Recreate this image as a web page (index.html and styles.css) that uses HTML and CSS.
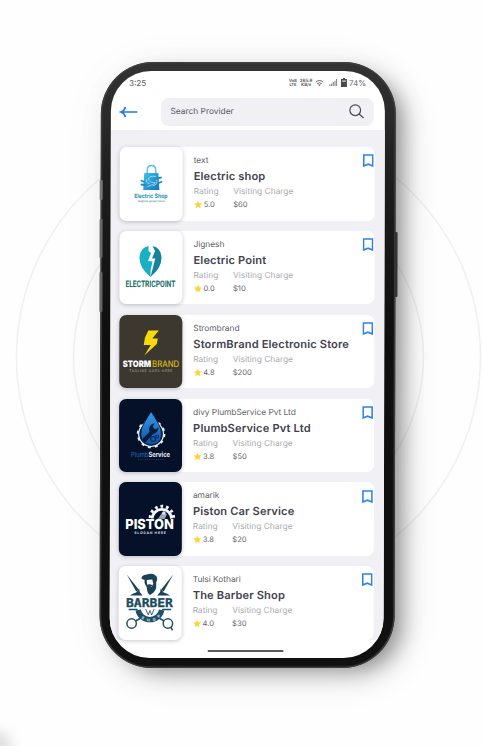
FILE: index.html
```html
<!DOCTYPE html>
<html lang="en">
<head>
<meta charset="utf-8">
<title>Service providers</title>
<link rel="stylesheet" href="styles.css">
</head>
<body>
<svg class="rings" viewBox="0 0 482 746" aria-hidden="true">
  <circle cx="248.5" cy="357" r="232"/><circle cx="248.5" cy="357" r="175"/>
</svg>
<div class="corner-smudge"></div>
<svg width="0" height="0" class="defs" aria-hidden="true">
  <defs>
    <symbol id="bookmark" viewBox="0 0 11 13"><path d="M1 1H10V12L5.5 10.2L1 12Z" fill="none" stroke="#2f83e4" stroke-width="1.6"/></symbol>
    <symbol id="star" viewBox="0 0 10 10"><path d="M5 .7L6.3 3.5L9.4 3.9L7.1 6L7.7 9.1L5 7.6L2.3 9.1L2.9 6L.6 3.9L3.7 3.5Z" fill="#fcd535"/></symbol>
    <linearGradient id="bag" x1="0" y1="0" x2="1" y2="1"><stop offset="0" stop-color="#3cc4ec"/><stop offset="1" stop-color="#1673b8"/></linearGradient>
    <linearGradient id="drop" x1="0" y1="0" x2="0" y2="1"><stop offset="0" stop-color="#3a9bea"/><stop offset="1" stop-color="#0d4fa8"/></linearGradient>
  </defs>
</svg>
<main class="phone">
  <i class="key key-right"></i><i class="key key-a"></i><i class="key key-b"></i><i class="key key-c"></i>
  <div class="screen">
    <header class="status">
      <span class="time">3:25</span>
      <span class="tiny">VoB<br>LTE</span>
      <span class="tiny rate">265.9<br>KB/s</span>
      <svg class="wifi" viewBox="0 0 10 8"><path d="M.8 3Q5-.6 9.2 3M2.4 4.8Q5 2.6 7.6 4.8" fill="none" stroke="#666" stroke-width="1.1"/><path d="M3.6 6L5 7.6L6.4 6Q5 5 3.6 6Z" fill="#666"/></svg>
      <svg class="signal" viewBox="0 0 9 8"><path d="M0 6H1.3V8H0ZM2 5H3.3V8H2ZM4 3.5H5.3V8H4ZM6 2H7.2V8H6ZM7.8 0H9V8H7.8Z" fill="#888"/></svg>
      <svg class="battery" viewBox="0 0 6 9"><path d="M2 0H4V1H6V9H0V1H2Z" fill="#4a4a4a"/><path d="M1 2.2H5V4H1Z" fill="#aaa"/></svg>
      <span class="percent">74%</span>
    </header>
    <div class="toolbar">
      <svg class="back" viewBox="0 0 18 12"><path d="M17.5 6H1.6M5.4 .8Q5 4.5 1 6Q5 7.5 5.4 11.2" fill="none" stroke="#147bf0" stroke-width="1.7"/></svg>
      <div class="search"><span>Search Provider</span>
        <svg viewBox="0 0 16 16"><circle cx="6.5" cy="6.6" r="5.7"/><path d="M10.7 10.6L15.4 15"/></svg>
      </div>
    </div>
    <section class="list">
      <article class="card">
        <div class="thumb"><svg viewBox="0 0 63 73.4">
          <path d="M27.5 28V23Q27.5 18.5 31.7 18.5Q36 18.5 36 23V28" fill="none" stroke="#4fc3e8" stroke-width="1.4"/>
          <path d="M24.5 26H38.7L39.7 43H23.5Z" fill="url(#bag)"/>
          <path d="M36 29.5Q29 28.5 29 32T34 35.5T28 39.5M27 32Q25.5 36 30 36.5M37 33Q38.5 37 33 39" fill="none" stroke="#a5dcf2" stroke-width=".9"/>
          <path d="M21 33.5L25 35M21 37.5L26 38M38 31.5L42 30.5M39 36L42.5 34.5" stroke="#2485b9" stroke-width="1.8"/>
          <text x="14.5" y="51.2" textLength="33.5" lengthAdjust="spacingAndGlyphs" class="lg-electric">Electric Shop</text>
          <text x="18" y="55" textLength="27" lengthAdjust="spacingAndGlyphs" class="lg-tag">tagline goes here</text>
        </svg></div>
        <div class="info"><p class="owner">text</p><h2>Electric shop</h2>
          <div class="facts"><span class="label">Rating</span><span class="label">Visiting Charge</span><span class="value"><svg><use href="#star"/></svg>5.0</span><span class="value">$60</span></div></div>
        <svg class="mark"><use href="#bookmark"/></svg>
      </article>
      <article class="card">
        <div class="thumb"><svg viewBox="0 0 63 73.4">
          <path d="M29 15Q20 17 20 27Q20 37 31 46L31.2 39L33 30.5L28.5 30L31.5 22L29 20Z" fill="#18b0c4"/>
          <path d="M33 15Q42 17 42 27Q42 37 31 46L35.8 27.5H32.5L35.5 20Z" fill="#168398"/>
          <text x="6" y="56.5" textLength="50" lengthAdjust="spacingAndGlyphs" class="lg-point">ELECTRICPOINT</text>
        </svg></div>
        <div class="info"><p class="owner">Jignesh</p><h2>Electric Point</h2>
          <div class="facts"><span class="label">Rating</span><span class="label">Visiting Charge</span><span class="value"><svg><use href="#star"/></svg>0.0</span><span class="value">$10</span></div></div>
        <svg class="mark"><use href="#bookmark"/></svg>
      </article>
      <article class="card">
        <div class="thumb storm"><svg viewBox="0 0 63 73.4">
          <path d="M29 15.5H39.5L33 23.5H38.5L37.5 29L25 40.5L31.5 30H24.5L25.5 23Z" fill="#f5d90a"/>
          <text x="3.5" y="51.8" textLength="28.4" lengthAdjust="spacingAndGlyphs" class="lg-storm">STORM</text>
          <text x="32.8" y="51.8" textLength="27.2" lengthAdjust="spacingAndGlyphs" class="lg-brand">BRAND</text>
          <text x="10" y="57.5" textLength="43" class="lg-line">TAGLINE GOES HERE</text>
        </svg></div>
        <div class="info"><p class="owner">Strombrand</p><h2>StormBrand Electronic Store</h2>
          <div class="facts"><span class="label">Rating</span><span class="label">Visiting Charge</span><span class="value"><svg><use href="#star"/></svg>4.8</span><span class="value">$200</span></div></div>
        <svg class="mark"><use href="#bookmark"/></svg>
      </article>
      <article class="card">
        <div class="thumb navy"><svg viewBox="0 0 63 73.4">
          <circle cx="32" cy="35" r="12.4" fill="none" stroke="#e3edf6" stroke-width="1.3"/>
          <circle cx="32" cy="35" r="13.3" fill="none" stroke="#e3edf6" stroke-width="2" stroke-dasharray="3 3.97"/>
          <path d="M32 12.5Q39 23 41.8 30Q45 45 32 46Q19 45 22.2 30Q25 23 32 12.5Z" fill="url(#drop)" stroke="#06132b" stroke-width=".8"/>
          <path d="M22.8 40.5L30.5 33Q29 28 32.5 25.5L35.5 24L33.5 28L36 30.5L39.5 28.5Q39 34 34 35L26 44Z" fill="#071a38"/>
          <circle cx="34" cy="40" r="2.4" fill="none" stroke="#092a59" stroke-width="1.2"/><circle cx="38" cy="37.5" r="1.5" fill="none" stroke="#092a59"/>
          <text x="12" y="57.8" class="lg-plumb" textLength="39" lengthAdjust="spacingAndGlyphs">Plumb<tspan class="lg-service">Service</tspan></text>
          <path d="M19 60.5H45" stroke="#19498a" stroke-width=".7" stroke-dasharray="1 .8"/>
        </svg></div>
        <div class="info"><p class="owner">divy PlumbService Pvt Ltd</p><h2>PlumbService Pvt Ltd</h2>
          <div class="facts"><span class="label">Rating</span><span class="label">Visiting Charge</span><span class="value"><svg><use href="#star"/></svg>3.8</span><span class="value">$50</span></div></div>
        <svg class="mark"><use href="#bookmark"/></svg>
      </article>
      <article class="card">
        <div class="thumb navy"><svg viewBox="0 0 63 73.4">
          <path d="M33.3 37A9.7 9.7 0 1 1 52.7 37" fill="none" stroke="#f4f6fa" stroke-width="2.8"/>
          <path d="M31.3 36A11.7 11.7 0 1 1 54.7 36" fill="none" stroke="#f4f6fa" stroke-width="3" stroke-dasharray="2.7 2.9"/>
          <path d="M39 37L43 31L48 32L46 37Z" fill="#9aa6bb"/><circle cx="45" cy="31" r="1.8" fill="#dfe5ee"/>
          <text x="6.5" y="47" textLength="48.5" lengthAdjust="spacingAndGlyphs" class="lg-piston">PISTON</text>
          <text x="15.5" y="52.5" textLength="31.5" class="lg-slogan">SLOGAN HERE</text>
        </svg></div>
        <div class="info"><p class="owner">amarik</p><h2>Piston Car Service</h2>
          <div class="facts"><span class="label">Rating</span><span class="label">Visiting Charge</span><span class="value"><svg><use href="#star"/></svg>3.8</span><span class="value">$20</span></div></div>
        <svg class="mark"><use href="#bookmark"/></svg>
      </article>
      <article class="card">
        <div class="thumb"><svg viewBox="0 0 63 73.4">
          <g fill="#1b4258">
            <path d="M23 13Q22 9 28 8.5Q34 6.5 37.5 10Q39.5 13 37.5 16V22Q36 27 31 29Q28 26 28 21Q25 17 26 14Z"/>
            <path d="M28 14L33.5 13.5L34.5 17.5L33 21L28.5 19Z" fill="#fff"/><path d="M28 19Q31 17.5 34 19.5L32 21Z"/>
            <path d="M8 8.5L20 23.5L17.5 25.5Z M54.5 8.5L42.5 23.5L45 25.5Z"/>
            <path d="M11 29.5Q15 27 17.5 26.5L20.5 22.5L21 26L24 29.5ZM51.5 29.5Q47.5 27 45 26.5L42 22.5L41.5 26L38.5 29.5Z"/>
          </g>
          <text x="7.3" y="40.6" textLength="47" lengthAdjust="spacingAndGlyphs" class="lg-barber">BARBER</text>
          <path d="M19.5 44A11.9 11.5 0 0 0 43 44" fill="none" stroke="#1d5069" stroke-width="5.4"/>
          <path d="M27 43L29.6 49L31.3 44.5L33 49L35.5 43" fill="none" stroke="#1b4258" stroke-width=".8"/>
          <g fill="none" stroke="#1d5069" stroke-width="1.5"><circle cx="13" cy="57.5" r="4.7"/><circle cx="49.3" cy="57.5" r="4.7"/><path d="M17 55L23 51.5M45.4 55L39.5 51.5M52 61L54 64.5M10 43.5H19M52.5 43.5H43.5"/></g>
          <path id="arc" d="M18.3 44A13 12.8 0 0 0 44.2 44" fill="none"/>
          <text class="lg-shop"><textPath href="#arc" startOffset="9.5" textLength="22">SHOP</textPath></text>
        </svg></div>
        <div class="info"><p class="owner">Tulsi Kothari</p><h2>The Barber Shop</h2>
          <div class="facts"><span class="label">Rating</span><span class="label">Visiting Charge</span><span class="value"><svg><use href="#star"/></svg>4.0</span><span class="value">$30</span></div></div>
        <svg class="mark"><use href="#bookmark"/></svg>
      </article>
    </section>
    <footer class="home"><i></i></footer>
  </div>
</main>
</body>
</html>
```
FILE: styles.css
```css
* { box-sizing: border-box; }
html { background: #fefefe; }
body {
  position: relative;
  width: 482px;
  height: 746px;
  margin: 0;
  padding: 62px 0 0 101px;
  overflow: hidden;
  font-family: Inter, "Open Sans", sans-serif;
  color: #55555f;
}
p, h2 { margin: 0; }
svg { display: block; overflow: visible; }
.defs { position: absolute; }
.rings { position: absolute; left: 0; top: 0; width: 482px; height: 746px; fill: none; stroke: #f0f0f0; stroke-width: 1.5; }
.corner-smudge { position: absolute; left: -24px; bottom: -24px; width: 36px; height: 40px; border-radius: 50%; background: #e0e0e0; filter: blur(6px); }

.phone {
  position: relative;
  width: 294.6px;
  height: 606px;
  padding: 9px 11px 10.3px 10px;
  border-radius: 52px;
  background: linear-gradient(180deg, #333 0, #1e1e1e 20%, #0f0f0f 45%, #111 100%);
  box-shadow: inset 0 0 1px 1.5px #3f3f3f, 12px 8px 20px -6px rgba(0,0,0,.36), 12px 10px 34px rgba(0,0,0,.12), 0 4px 50px rgba(0,0,0,.04);
  transform: skewX(-.14deg);
  transform-origin: top left;
}
.key { position: absolute; background: #333; border-radius: 1px; width: 2.5px; }
.key-right { right: -2.3px; top: 170px; height: 65px; }
.key-a { left: -1px; top: 118px; height: 20px; background: #777; }
.key-b { left: -1px; top: 157px; height: 39px; background: #666; }
.key-c { left: -1px; top: 210px; height: 40px; background: #666; }

.screen {
  display: flex;
  flex-direction: column;
  height: 100%;
  overflow: hidden;
  border-radius: 40px;
  background: #fff;
}
.status { display: flex; align-items: center; height: 23px; padding: 0 18.5px 0 18px; font-size: 8px; color: #606060; }
.time { margin-right: auto; font-size: 8.2px; }
.tiny { font-size: 4px; line-height: 4px; font-weight: 700; text-align: center; }
.rate { margin: 0 2.5px 0 3px; font-size: 4.4px; }
.wifi { width: 9px; height: 8px; margin-right: 4.5px; }
.signal { width: 8.5px; height: 7px; margin-right: 3.5px; }
.battery { width: 6px; height: 9px; margin-right: 2.5px; }

.toolbar { display: flex; align-items: flex-start; height: 36.3px; padding: 4px 11px 0 9px; }
.back { width: 18px; height: 12px; margin-top: 7.5px; }
.search {
  display: flex;
  align-items: center;
  justify-content: space-between;
  width: 213px;
  height: 28.3px;
  margin-left: auto;
  padding: 0 9.5px 0 10px;
  border-radius: 8px;
  background: #f1f0f5;
  font-size: 8.4px;
}
.search span { margin-top: -2px; }
.search svg { width: 15.5px; height: 15px; margin-top: -1px; fill: none; stroke: #4b4854; stroke-width: 1.3; }

.list {
  display: grid;
  grid-auto-rows: 73.4px;
  gap: 10.4px;
  height: 509.9px;
  padding: 17px 9.6px 0 9.2px;
  background: #f0f0f5;
}
.card { display: flex; align-items: flex-start; border-radius: 7px; background: #fff; }
.thumb { width: 63px; height: 73.4px; border-radius: 7px; background: #fff; box-shadow: 0 1px 4px rgba(30,30,50,.26); }
.storm { background: #3c382f; }
.navy { background: #041128; }
.info { flex: 1; min-width: 0; padding: 6.9px 0 0 10.8px; white-space: nowrap; }
.owner { font-size: 8.4px; line-height: 13px; letter-spacing: -.04px; color: #606068; }
h2 { font-size: 11.1px; line-height: 18px; font-weight: 600; letter-spacing: .15px; color: #42424f; }
.facts { display: grid; grid-template-columns: 39.5px auto; line-height: 13px; }
.label { font-size: 8.3px; letter-spacing: .03px; color: #a9a9ae; }
.value { display: flex; align-items: center; font-size: 7.6px; color: #66666b; }
.value svg { width: 9px; height: 9px; margin-right: 1px; }
.mark { flex: none; width: 11px; height: 13px; margin: 7.2px .8px 0 0; }

.home { display: flex; justify-content: center; padding-top: 9.4px; }
.home i { width: 76px; height: 2.2px; margin-right: 2px; border-radius: 2px; background: #5a5a5a; }

.lg-electric { font: 700 6px Inter, sans-serif; fill: #2a8fb5; }
.lg-tag { font: 600 2.6px Inter, sans-serif; fill: #4b9bb4; }
.lg-point { font: 700 9px Roboto, sans-serif; fill: #147068; }
.lg-storm { font: 900 8.8px Inter, sans-serif; fill: #fff; }
.lg-brand { font: 500 9px Inter, sans-serif; fill: #d6b91c; }
.lg-line { font: 3.3px Inter, sans-serif; fill: #b5b1a5; }
.lg-plumb { font: 500 7.2px Inter, sans-serif; fill: #1e60b0; }
.lg-service { font-weight: 700; fill: #e8eef5; }
.lg-piston { font: 800 13.8px Inter, sans-serif; fill: #fff; stroke: #041128; stroke-width: .8px; paint-order: stroke; }
.lg-slogan { font: 700 3.5px Inter, sans-serif; fill: #d4d9e3; }
.lg-barber { font: 700 12px "DejaVu Sans Mono", monospace; fill: #1b4a60; stroke: #1b4a60; stroke-width: .3px; }
.lg-shop { font: 700 3.8px Inter, sans-serif; fill: #e6eef2; }
```
